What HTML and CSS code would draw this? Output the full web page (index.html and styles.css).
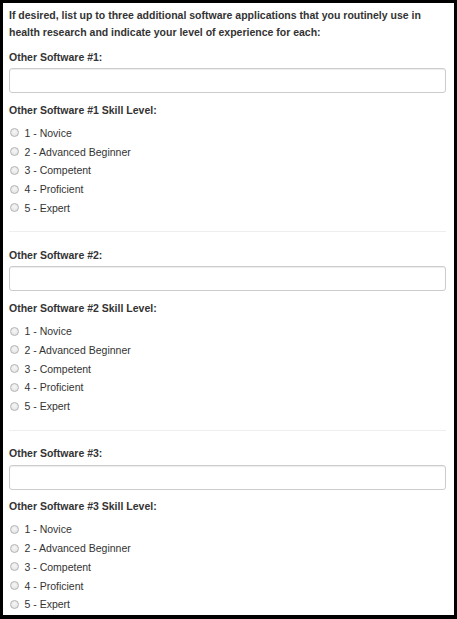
FILE: index.html
```html
<!DOCTYPE html>
<html>
<head>
<meta charset="utf-8">
<link rel="stylesheet" href="styles.css">
</head>
<body>
<div class="frame">
  <p class="intro">If desired, list up to three additional software applications that you routinely use in health research and indicate your level of experience for each:</p>

  <div class="section">
    <label class="field-label">Other Software #1:</label>
    <input class="text-input" type="text">
    <div class="field-label skill">Other Software #1 Skill Level:</div>
    <ul class="options">
      <li><span class="radio"></span>1 - Novice</li>
      <li><span class="radio"></span>2 - Advanced Beginner</li>
      <li><span class="radio"></span>3 - Competent</li>
      <li><span class="radio"></span>4 - Proficient</li>
      <li><span class="radio"></span>5 - Expert</li>
    </ul>
  </div>
  <hr class="sep">
  <div class="section">
    <label class="field-label">Other Software #2:</label>
    <input class="text-input" type="text">
    <div class="field-label skill">Other Software #2 Skill Level:</div>
    <ul class="options">
      <li><span class="radio"></span>1 - Novice</li>
      <li><span class="radio"></span>2 - Advanced Beginner</li>
      <li><span class="radio"></span>3 - Competent</li>
      <li><span class="radio"></span>4 - Proficient</li>
      <li><span class="radio"></span>5 - Expert</li>
    </ul>
  </div>
  <hr class="sep">
  <div class="section">
    <label class="field-label">Other Software #3:</label>
    <input class="text-input" type="text">
    <div class="field-label skill">Other Software #3 Skill Level:</div>
    <ul class="options">
      <li><span class="radio"></span>1 - Novice</li>
      <li><span class="radio"></span>2 - Advanced Beginner</li>
      <li><span class="radio"></span>3 - Competent</li>
      <li><span class="radio"></span>4 - Proficient</li>
      <li><span class="radio"></span>5 - Expert</li>
    </ul>
  </div>
</div>
</body>
</html>
```

FILE: styles.css
```css
html, body {
  margin: 0;
  padding: 0;
  background: #000;
}

.frame {
  box-sizing: border-box;
  width: 457px;
  height: 619px;
  overflow: hidden;
  background: #fff;
  border-style: solid;
  border-color: #000;
  border-width: 3px 3px 4px 3px;
  padding: 4px 8px 0 6px;
  font-family: "Liberation Sans", Arial, sans-serif;
  font-size: 10.5px;
  color: #333;
}

.intro {
  margin: 0;
  font-weight: bold;
  line-height: 17px;
}

.section {
  display: flex;
  flex-direction: column;
}

.field-label {
  display: block;
  font-weight: bold;
  line-height: 17px;
}

.section > .field-label:first-child {
  margin-top: 7.5px;
}

.text-input {
  box-sizing: border-box;
  margin: 2.5px 0 0 0;
  height: 25px;
  width: 100%;
  border: 1px solid #ccc;
  border-radius: 3px;
  background: #fff;
  box-shadow: inset 0 1px 1px rgba(0,0,0,0.075);
  padding: 0 6px;
  font: inherit;
}

.skill {
  margin-top: 8.5px;
}

.options {
  list-style: none;
  margin: 5px 0 0 0;
  padding: 0;
}

.options li {
  display: flex;
  align-items: center;
  height: 18.75px;
  font-weight: normal;
}

.radio {
  box-sizing: border-box;
  width: 9px;
  height: 9px;
  border-radius: 50%;
  border: 1px solid #b3b3b3;
  background: radial-gradient(circle at 50% 40%, #f6f6f6 0, #e0e0e0 100%);
  margin: 0 6px 0 0.5px;
  flex: none;
}

.sep {
  border: 0;
  border-top: 1px solid #eee;
  margin: 14px 0 7px 0;
  height: 0;
}
```
